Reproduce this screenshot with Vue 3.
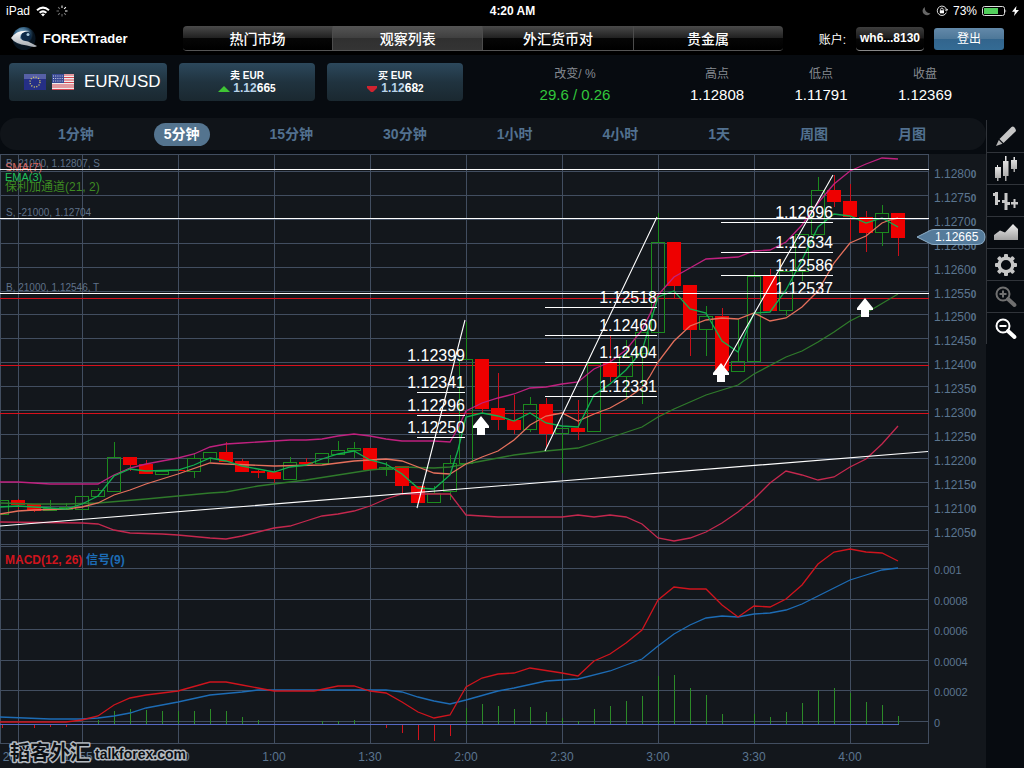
<script setup>
import { ref } from 'vue'

const tabs = ['热门市场', '观察列表', '外汇货币对', '贵金属']
const activeTab = ref(1)
const intervals = ['1分钟', '5分钟', '15分钟', '30分钟', '1小时', '4小时', '1天', '周图', '月图']
const activeInterval = ref(1)
const stats = [
  { label: '改变/ %', value: '29.6 / 0.26', up: true },
  { label: '高点', value: '1.12808' },
  { label: '低点', value: '1.11791' },
  { label: '收盘', value: '1.12369' },
]
const quotes = [
  { side: '卖', up: true, base: '1.12', pips: '66', frac: '5' },
  { side: '买', up: false, base: '1.12', pips: '68', frac: '2' },
]

const gridX = [0.5, 18.5, 82.5, 178.5, 274.5, 370.5, 466.5, 562.5, 658.5, 754.5, 850.5, 928.5]
const gridY = [154.5, 171.5, 195.5, 219.5, 243.5, 267.5, 291.5, 314.5, 338.5, 362.5, 386.5, 410.5, 434.5, 458.5, 482.5, 506.5, 530.5, 544.5,
  546.5, 568.5, 599.5, 629.5, 660.5, 690.5, 721.5, 743.5]
const prices = ['1.1280', '1.1275', '1.1270', '1.1265', '1.1260', '1.1255', '1.1250', '1.1245', '1.1240', '1.1235', '1.1230', '1.1225', '1.1220', '1.1215', '1.1210', '1.1205']
const macdTicks = [['0.001', 568], ['0.0008', 599], ['0.0006', 629], ['0.0004', 660], ['0.0002', 690], ['0', 721]]
const times = [['2015', 16], ['11:55', 78], ['0:30', 178], ['1:00', 274], ['1:30', 370], ['2:00', 466], ['2:30', 562], ['3:00', 658], ['3:30', 754], ['4:00', 850]]

// direction, body top, body bottom, high, low; one entry for each five minutes
const candles = [
  ['g', 500, 514, 500, 514], ['r', 500, 505, 499, 509], ['r', 504, 511, 504, 512], ['g', 508, 510, 500, 510],
  ['g', 507, 509, 503, 509], ['g', 496, 509, 496, 509], ['g', 490, 496, 488, 496], ['g', 457, 491, 442, 491],
  ['r', 457, 465, 457, 471], ['r', 464, 474, 460, 474], ['g', 471, 474, 471, 474], ['r', 470, 471, 470, 471],
  ['g', 458, 471, 453, 478], ['g', 452, 458, 452, 462], ['r', 452, 462, 442, 462], ['r', 461, 472, 459, 472],
  ['r', 471, 473, 470, 478], ['r', 472, 479, 472, 483], ['g', 462, 479, 457, 480], ['r', 462, 464, 458, 464],
  ['g', 453, 463, 453, 463], ['g', 450, 454, 441, 454], ['g', 448, 450, 442, 458], ['r', 448, 470, 448, 470],
  ['g', 467, 469, 462, 476], ['r', 466, 486, 466, 495], ['r', 486, 503, 486, 503], ['g', 493, 502, 486, 502],
  ['g', 463, 491, 455, 500], ['g', 359, 463, 322, 463], ['r', 359, 409, 359, 414], ['r', 408, 420, 373, 430],
  ['r', 420, 430, 395, 434], ['g', 404, 429, 397, 432], ['r', 404, 434, 398, 448], ['g', 428, 433, 428, 473],
  ['r', 428, 432, 400, 440], ['g', 363, 431, 363, 431], ['r', 362, 377, 335, 382], ['g', 356, 376, 340, 400],
  ['g', 332, 353, 332, 404], ['g', 242, 332, 213, 332], ['r', 242, 286, 242, 299], ['r', 285, 330, 285, 356],
  ['g', 316, 329, 306, 356], ['r', 316, 371, 308, 371], ['g', 361, 371, 319, 371], ['g', 276, 361, 272, 361],
  ['r', 276, 311, 269, 311], ['g', 271, 310, 271, 316], ['g', 234, 271, 234, 281], ['g', 190, 234, 177, 234],
  ['r', 190, 202, 175, 207], ['r', 201, 217, 184, 240], ['r', 217, 233, 211, 252], ['g', 213, 232, 205, 246],
  ['r', 213, 238, 213, 256],
].map(([dir, top, bottom, high, low], i) => ({ up: dir === 'g', top, bottom, high, low, x: 2 + i * 16 }))

const studies = [
  { color: '#c0217f', pts: '0,482 18,482 50,484 98,484 114,475 130,468 146,464 162,461 178,458 194,454 210,447 226,444 242,443 258,442 274,441 290,440 306,440 322,439 338,436 354,434 370,436 386,439 402,441 434,441 450,442 458,428 466,411 482,403 498,398 514,394 530,388 546,387 562,384 578,382 594,369 610,362 626,350 642,330 650,314 658,295 674,277 690,268 706,259 738,257 754,251 770,250 786,242 802,225 818,203 834,184 850,171 866,164 882,158 898,159' },
  { color: '#c4284e', pts: '0,522 82,523 98,524 114,530 130,533 162,534 178,535 210,538 226,539 242,536 274,528 290,526 306,521 322,516 338,514 354,511 370,506 386,499 402,494 450,494 466,515 498,517 562,517 578,515 594,517 610,515 626,517 642,524 658,538 674,541 690,538 706,532 722,523 738,512 754,499 770,483 786,471 802,475 818,480 834,477 850,467 866,459 882,444 898,426' },
  { color: '#2f7a2b', pts: '0,503 34,504 66,504 98,503 146,499 178,496 210,493 226,492 258,486 306,480 338,475 370,470 402,467 434,468 450,467 466,464 482,461 514,455 546,451 578,448 594,443 642,427 658,417 674,409 706,395 738,385 754,374 786,357 802,351 818,342 834,332 850,321 866,313 898,294' },
  { color: '#e5705c', pts: '0,514 18,511 34,510 66,509 82,507 98,503 114,495 130,490 146,484 178,474 210,463 226,464 274,466 322,465 338,463 354,461 370,460 386,459 402,461 418,467 434,473 450,474 466,464 482,457 498,451 514,440 530,425 546,416 562,413 578,421 594,414 610,408 626,399 642,388 650,376 658,362 674,341 690,326 706,320 722,318 738,319 754,313 770,321 786,318 802,307 818,291 834,263 850,243 866,236 882,223 890,220 898,218' },
  { color: '#12b04f', pts: '0,507 18,506 34,507 66,509 82,504 98,496 114,476 130,469 146,471 178,470 194,465 210,458 226,461 242,466 274,472 290,467 306,465 322,459 338,454 354,451 370,460 386,464 402,474 418,488 434,489 450,475 458,450 466,417 482,413 498,416 514,421 530,413 546,423 562,426 578,427 594,395 610,384 626,370 642,351 658,297 674,291 690,309 706,313 722,341 738,352 754,313 770,312 786,290 802,260 818,227 834,214 850,216 866,223 882,218 898,227' },
  { color: '#1d6cb5', pts: '0,717 50,719 82,719 98,718 114,716 130,713 146,708 178,702 210,695 242,692 258,690 386,690 402,692 418,697 434,701 450,704 466,700 498,691 514,688 546,681 578,679 610,671 642,659 658,646 674,634 690,625 706,618 722,616 738,617 754,614 770,613 786,610 802,604 818,596 834,588 850,580 866,575 882,570 898,568' },
  { color: '#d0141d', pts: '0,722 66,722 82,720 98,716 114,705 130,698 146,695 178,691 210,682 226,682 242,685 274,691 314,691 338,686 354,686 370,691 386,693 402,702 418,712 434,718 450,715 466,687 482,678 498,674 514,673 530,668 562,673 578,676 594,661 610,654 626,643 642,630 658,600 674,587 690,589 706,589 722,605 738,617 754,606 770,607 786,599 802,585 818,564 834,552 850,549 866,552 882,553 898,561' },
]

const histogram = [[2, 728], [34, 728], [50, 727], [66, 727], [98, 720], [114, 711], [130, 709], [146, 710], [162, 711], [178, 711], [194, 711], [210, 709], [226, 711], [242, 717], [258, 720],
  [322, 721], [338, 721], [354, 720], [386, 728], [402, 733], [418, 740], [434, 741], [450, 736], [466, 708], [482, 704], [498, 706], [514, 709], [530, 707], [546, 712], [562, 718], [578, 721],
  [594, 709], [610, 706], [626, 701], [642, 696], [658, 676], [674, 675], [690, 688], [706, 695], [722, 714], [754, 714], [770, 717], [786, 712], [802, 703], [818, 690], [834, 688], [850, 693], [866, 702], [882, 705], [898, 716]]

const fibs = [
  { from: 417, to: 465, levels: [392, 415, 437], labels: [['1.12399', 361], ['1.12341', 388], ['1.12296', 411], ['1.12250', 433]] },
  { from: 545, to: 657, levels: [307, 335, 362, 396], labels: [['1.12518', 303], ['1.12460', 331], ['1.12404', 358], ['1.12331', 392]] },
  { from: 721, to: 833, levels: [222, 252, 275], labels: [['1.12696', 218], ['1.12634', 248], ['1.12586', 271], ['1.12537', 294]] },
]
const arrows = [[481, 416], [721, 363], [865, 298]]
const orders = [['B, 21000, 1.12807, S', 167], ['S, -21000, 1.12704', 216], ['B, 21000, 1.12546, T', 291]]
const tools = ['pencil', 'candles', 'bars', 'area', 'gear', 'zoomIn', 'zoomOut']
const toolNames = { pencil: '绘图', candles: '蜡烛图', bars: '柱状图', area: '面积图', gear: '设置', zoomIn: '放大', zoomOut: '缩小' }
const teeth = [0, 45, 90, 135, 180, 225, 270, 315]
const rays = [0, 45, 90, 135, 180, 225, 270, 315]
</script>

<template>
  <div class="app">
    <div class="status">
      <div class="status-left">
        <span>iPad</span>
        <svg width="14" height="11" viewBox="0 0 14 11" fill="none" stroke="#fff" stroke-width="2">
          <path d="M1 4.2Q7-1 13 4.2M3.6 6.8Q7 4 10.4 6.8" />
          <path d="M7 10.5L5 8.3Q7 6.9 9 8.3Z" fill="#fff" stroke="none" />
        </svg>
        <svg width="12" height="12" viewBox="-6 -6 12 12">
          <path v-for="(a, i) in rays" :key="a" d="M0-3V-5.5" stroke="#fff" :opacity="i < 3 ? 1 : 0.45" :transform="`rotate(${a})`" />
        </svg>
      </div>
      <span class="clock">4:20 AM</span>
      <div class="status-right">
        <svg width="9" height="10" viewBox="0 0 9 10"><path d="M3 1A4.3 4.3 0 1 0 8.5 7.2A5 5 0 0 1 3 1Z" fill="#666" /></svg>
        <svg width="12" height="12" viewBox="0 0 12 12" fill="none" stroke="#ddd">
          <path d="M10.3 7.6A4.7 4.7 0 1 1 10.6 5M8.8 4.6l1.8 1.4 1.2-1.9" />
          <path d="M4.6 5.5V4.4a1.3 1.3 0 0 1 2.6 0v1.1" />
          <rect x="3.8" y="5.3" width="4.2" height="3" fill="#fff" stroke="none" />
        </svg>
        <span>73%</span>
        <svg width="25" height="11" viewBox="0 0 25 11">
          <rect x=".5" y=".5" width="22" height="9" rx="2" fill="none" stroke="#ddd" />
          <rect x="2" y="2" width="14" height="6" fill="#52cf5c" />
          <path d="M23.5 3.3q1.5 1.7 0 3.4z" fill="#ddd" />
        </svg>
        <svg width="7" height="10" viewBox="0 0 7 10"><path d="M4.5 0L0 5.7H2.8L2 10L7 4H3.9Z" fill="#fff" /></svg>
      </div>
    </div>

    <header class="top">
      <div class="brand">
        <svg width="28" height="26" viewBox="0 0 28 26">
          <defs>
            <radialGradient id="globe" cx=".4" cy=".3"><stop offset="0" stop-color="#9cc4de" /><stop offset=".55" stop-color="#3a6788" /><stop offset="1" stop-color="#071420" /></radialGradient>
            <linearGradient id="silver" x2="0" y2="1"><stop offset="0" stop-color="#fff" /><stop offset="1" stop-color="#a5aab0" /></linearGradient>
          </defs>
          <circle cx="14" cy="12.5" r="11.5" fill="url(#globe)" />
          <circle cx="16" cy="10.5" r="5" fill="#0d2a48" />
          <circle cx="18" cy="8.5" r="1.5" fill="#a9cbe0" />
          <path d="M1 12Q7 3 20 5Q9 6 10 12Q12 15 18 15.500L27 20Q25 22 17 19.500Q5 18 1 12Z" fill="url(#silver)" />
        </svg>
        <span>FOREXTrader</span>
      </div>
      <nav class="tabs">
        <button v-for="(t, i) in tabs" :key="t" type="button" :class="{ active: i === activeTab }" @click="activeTab = i">{{ t }}</button>
      </nav>
      <div class="account">
        <label for="account">账户:</label>
        <button id="account" type="button" class="acct">wh6...8130</button>
        <button type="button" class="logout">登出</button>
      </div>
    </header>

    <section class="quotes">
      <button type="button" class="card pair">
        <svg width="22" height="16" viewBox="0 0 22 16">
          <rect width="22" height="16" fill="#252f86" />
          <rect width="22" height="5" fill="#5660a6" />
          <circle cx="11" cy="8" r="5" fill="none" stroke="#d8cc6a" stroke-width="1.3" stroke-dasharray="1.1 1.518" />
        </svg>
        <svg width="22" height="16" viewBox="0 0 22 16">
          <rect width="22" height="16" fill="#eee" />
          <path d="M0 1H22M0 3.500H22M0 6H22M0 8.500H22M0 11H22M0 13H22M0 15.500H22" stroke="#d54551" stroke-width="1.2" />
          <rect width="12" height="9" fill="#3a4a94" />
          <path d="M1 2H12M1 4.500H12M1 7H12" stroke="#cfd4ea" stroke-dasharray="1 1.200" />
        </svg>
        <span>EUR/USD</span>
      </button>
      <button v-for="q in quotes" :key="q.side" type="button" class="card quote">
        <span class="side">{{ q.side }} EUR</span>
        <span class="rate">
          <svg width="12" height="8" viewBox="0 0 12 8">
            <path v-if="q.up" d="M0 7L6 1L12 7Z" fill="#3fc534" />
            <path v-else d="M1 1H11V3L7 7H5L1 3Z" fill="#d1232f" />
          </svg>
          <span><i>{{ q.base }}</i>{{ q.pips }}<small>{{ q.frac }}</small></span>
        </span>
      </button>
      <dl class="stats">
        <div v-for="s in stats" :key="s.label">
          <dt>{{ s.label }}</dt>
          <dd :class="{ up: s.up }">{{ s.value }}</dd>
        </div>
      </dl>
    </section>

    <div class="body">
      <main>
        <nav class="intervals">
          <button v-for="(t, i) in intervals" :key="t" type="button" :class="{ active: i === activeInterval }" @click="activeInterval = i">{{ t }}</button>
        </nav>
        <svg class="chart" viewBox="0 154 986 614" role="img" aria-label="EUR/USD">
          <g stroke="#424e60">
            <line v-for="x in gridX" :key="'x' + x" :x1="x" :x2="x" y1="154" y2="744" />
            <line v-for="y in gridY" :key="'y' + y" x1="0" x2="929" :y1="y" :y2="y" />
          </g>
          <g font-size="10" fill="#5f7189">
            <text v-for="o in orders" :key="o[0]" x="6" :y="o[1]">{{ o[0] }}</text>
          </g>
          <text x="5" y="171" font-size="11" fill="#d9675f">SMA(7)</text>
          <text x="5" y="181" font-size="11" fill="#1fc05a">EMA(3)</text>
          <text x="5" y="191" font-size="12" fill="#3d8a22">保利加通道(21, 2)</text>
          <text x="5" y="564" font-size="12" font-weight="700" fill="#d0141d">MACD(12, 26)</text>
          <text x="86" y="564" font-size="12" font-weight="700" fill="#1d6cb5">信号(9)</text>

          <path d="M0 298.500H929M0 365.500H929M0 413.500H929" stroke="#d8101c" />
          <g v-for="c in candles" :key="c.x">
            <rect :x="c.x" :y="c.high" width="1" :height="c.top - c.high" :fill="c.up ? '#1c8a1e' : '#c9101a'" />
            <rect :x="c.x" :y="c.bottom" width="1" :height="c.low - c.bottom" :fill="c.up ? '#1c8a1e' : '#c9101a'" />
            <rect v-if="c.up" :x="c.x - 6.5" :y="c.top + 0.5" width="13" :height="c.bottom - c.top" fill="none" stroke="#1c8a1e" />
            <rect v-else :x="c.x - 7" :y="c.top" width="14" :height="c.bottom - c.top" fill="#ee0000" />
          </g>
          <rect v-for="h in histogram" :key="'h' + h[0]" :x="h[0]" :y="Math.min(h[1], 724)" width="1" :height="Math.abs(h[1] - 724)" :fill="h[1] < 724 ? '#2c8a28' : '#d0141d'" />
          <rect y="724" width="899" height="1" fill="#5468c4" />
          <polyline v-for="s in studies" :key="s.color" :points="s.pts" fill="none" :stroke="s.color" stroke-width="1.3" />

          <g fill="#fff">
            <rect y="169" width="929" height="1" /><rect y="218" width="929" height="1" /><rect y="293" width="929" height="1" />
          </g>
          <path d="M0 526L928 451.500M417 508L465 320M545 451L657 217M721 372L833 175" stroke="#fff" stroke-width="1.1" fill="none" />
          <g v-for="f in fibs" :key="f.from" fill="#fff" font-size="16">
            <rect v-for="l in f.levels" :key="l" :x="f.from" :y="l" :width="f.to - f.from" height="1" />
            <text v-for="t in f.labels" :key="t[0]" :x="f.to" :y="t[1]" text-anchor="end">{{ t[0] }}</text>
          </g>
          <path v-for="a in arrows" :key="a[0]" :transform="`translate(${a[0]} ${a[1]})`" d="M0 0L8 10V12H4V19H-4V12H-8V10Z" fill="#fff" />

          <g fill="#5b7590" font-size="12">
            <text v-for="(p, i) in prices" :key="p" x="934" :y="gridY[i + 1] + 6.5">{{ p }}<tspan font-size="10" font-weight="700">0</tspan></text>
            <text v-for="t in times" :key="t[0]" :x="t[1]" y="761" text-anchor="middle">{{ t[0] }}</text>
          </g>
          <g fill="#5b7590" font-size="11">
            <text v-for="t in macdTicks" :key="t[0]" x="934" :y="t[1] + 6">{{ t[0] }}</text>
          </g>
          <path d="M917 237L929 231Q931 229.500 934 229.500H977Q985 229.500 985 237Q985 244.500 977 244.500H934Q931 244.500 929 243Z" fill="#557b9b" stroke="#8fb0ca" />
          <text x="935" y="241" font-size="12" fill="#fff">1.12665</text>

          <g class="mark">
            <text x="10" y="760" font-size="20">韬客外汇</text>
            <text x="95" y="759" font-size="14">talkforex.com</text>
          </g>
        </svg>
      </main>

      <aside class="tools">
        <button v-for="t in tools" :key="t" type="button" :aria-label="toolNames[t]">
          <svg width="26" height="26" viewBox="0 0 26 26">
            <defs><linearGradient id="metal" x2="0" y2="1"><stop offset="0" stop-color="#eee" /><stop offset="1" stop-color="#a2a2a2" /></linearGradient></defs>
            <template v-if="t === 'pencil'">
              <path d="M6.500 16L18.500 4Q20 3 21.500 4.500L22.500 6Q23.500 7.500 22.500 8.500L10.500 20Z" fill="#c6c6c6" />
              <path d="M5.800 17L9.500 20.700L3 23Z" fill="#b5b5b5" />
            </template>
            <g v-else-if="t === 'candles'" fill="url(#metal)">
              <path d="M2 11H4V9H5V11H8V22H5.500V25H4V22H2Z" />
              <path d="M10 5H12V0H13.500V5H15.500V20H13.500V25H12V20H10Z" />
              <path d="M18 4H20.500V1H22V4H24V13H22V16H20.500V13H18Z" />
            </g>
            <g v-else-if="t === 'bars'" fill="#c9c9c9">
              <path d="M0 5H2V4H5V12H7V14H5V17H2V8H0Z" />
              <path d="M9 12H11.500V5H14.500V14H17V17H14.500V22H11.500V15H9Z" />
              <path d="M18 14H20.500V11H22.500V14H25V16.500H22.500V20H20.500V16.500H18Z" />
            </g>
            <path v-else-if="t === 'area'" d="M1 15L7 10.500L12 12.500L20 4L25 9V20H1Z" fill="url(#metal)" />
            <g v-else-if="t === 'gear'">
              <rect v-for="a in teeth" :key="a" x="11" y="2" width="4" height="5" rx="1" fill="#c6c6c6" :transform="`rotate(${a} 13 13)`" />
              <circle cx="13" cy="13" r="6.800" fill="none" stroke="#c6c6c6" stroke-width="3.400" />
            </g>
            <g v-else :stroke="t === 'zoomIn' ? '#707070' : '#fff'" fill="none">
              <circle cx="10" cy="10" r="6.500" stroke-width="2" />
              <path d="M6.500 10H13.500" stroke-width="2" />
              <path v-if="t === 'zoomIn'" d="M10 6.500V13.500" stroke-width="2" />
              <path d="M15 15L21.500 21" stroke-width="4" stroke-linecap="round" />
            </g>
          </svg>
        </button>
      </aside>
    </div>
  </div>
</template>

<style>
body {
  margin: 0;
  background: #070b10;
}
</style>

<style scoped>
.app {
  font-family: "Liberation Sans", "Noto Sans CJK SC", sans-serif;
  color: #fff;
  background: #070b10;
}
button {
  font: inherit;
  color: inherit;
  border: 0;
  padding: 0;
  margin: 0;
  background: none;
  cursor: pointer;
}
svg {
  display: block;
  flex: none;
}
.status {
  display: grid;
  grid-template-columns: 1fr auto 1fr;
  align-items: center;
  height: 22px;
  padding: 0 5px 0 6px;
  background: #000;
  font-size: 12px;
}
.status-left,
.status-right {
  display: flex;
  align-items: center;
  gap: 6px;
}
.status-right {
  justify-content: flex-end;
  gap: 5px;
}
.clock {
  font-weight: 700;
  font-size: 12px;
}
.top {
  display: flex;
  align-items: center;
  height: 33px;
  padding-right: 20px;
  background: #000;
}
.brand {
  display: flex;
  align-items: center;
  gap: 5px;
  width: 173px;
  padding-left: 10px;
  font-size: 13px;
  font-weight: 700;
}
.tabs {
  display: flex;
  flex: 1;
  height: 24px;
  border-bottom: 1px solid #555;
  border-radius: 4px;
  overflow: hidden;
}
.tabs button {
  flex: 1;
  font-size: 14px;
  font-weight: 500;
  line-height: 26px;
  background: linear-gradient(#4a4a4a, #222 48%, #060606 52%, #000);
}
.tabs button + button {
  border-left: 1px solid #4c4c4c;
}
.tabs .active {
  background: linear-gradient(#555, #404040 48%, #303030 52%, #343434);
}
.account {
  display: flex;
  align-items: center;
  gap: 10px;
  padding-left: 36px;
  font-size: 12px;
}
.acct {
  width: 68px;
  height: 24px;
  border-radius: 4px;
  border-bottom: 1px solid #888;
  font-size: 12px;
  font-weight: 700;
  background: linear-gradient(#3e3e3e, #1c1c1c 48%, #050505 52%, #000);
}
.logout {
  width: 70px;
  height: 22px;
  border-radius: 3px;
  font-size: 12px;
  line-height: 18px;
  background: linear-gradient(#6389a9, #4e7899 48%, #32658d 52%, #346b94);
}
.quotes {
  display: flex;
  align-items: flex-start;
  gap: 12px;
  height: 55px;
  padding: 8px 0 0 9px;
}
.card {
  display: flex;
  align-items: center;
  height: 38px;
  border-radius: 4px;
  background: linear-gradient(#2c485c, #20333f 50%, #1a2830);
}
.pair {
  gap: 6px;
  width: 158px;
  padding-left: 15px;
  font-size: 17px;
}
.pair span {
  margin-left: 4px;
}
.quote {
  flex-direction: column;
  justify-content: center;
  width: 136px;
  font-weight: 700;
}
.side {
  font-size: 10px;
  line-height: 13px;
}
.rate {
  display: flex;
  align-items: center;
  gap: 3px;
  font-size: 12px;
  line-height: 13px;
}
.rate i {
  font-style: normal;
  color: #b9d3ea;
}
.rate small {
  font-size: 10px;
}
.stats {
  display: grid;
  flex: 1;
  grid-template-columns: 180fr 104fr 104fr 104fr;
  margin: 0;
  padding: 2px 47px 0 10px;
  text-align: center;
}
.stats dt {
  font-size: 12px;
  line-height: 18px;
  color: #858a90;
}
.stats dd {
  margin: 2px 0 0;
  font-size: 15px;
  line-height: 20px;
}
.stats .up {
  color: #32c73c;
}
.body {
  display: grid;
  grid-template-columns: 1fr 38px;
}
.intervals {
  display: flex;
  justify-content: space-between;
  align-items: center;
  height: 32px;
  margin-bottom: 4px;
  padding: 0 50px 0 48px;
  border-radius: 16px;
  background: #101419;
  color: #527190;
  font-size: 14px;
  font-weight: 700;
}
.intervals button {
  height: 23px;
  padding: 0 10px;
  border-radius: 12px;
  line-height: 22px;
}
.intervals .active {
  color: #fff;
  background: #54748f;
}
.chart {
  width: 100%;
  height: auto;
  background: #13171c;
}
.mark {
  fill: #0c0f13;
  stroke: #b4bac0;
  stroke-width: 3px;
  paint-order: stroke;
  stroke-linejoin: round;
  font-weight: 700;
}
.tools {
  align-self: start;
  margin-top: 2px;
  border-left: 1px solid #30343a;
}
.tools button {
  display: grid;
  place-items: center;
  width: 100%;
  height: 32px;
}
.tools button + button {
  border-top: 1px solid #30343a;
}
</style>
